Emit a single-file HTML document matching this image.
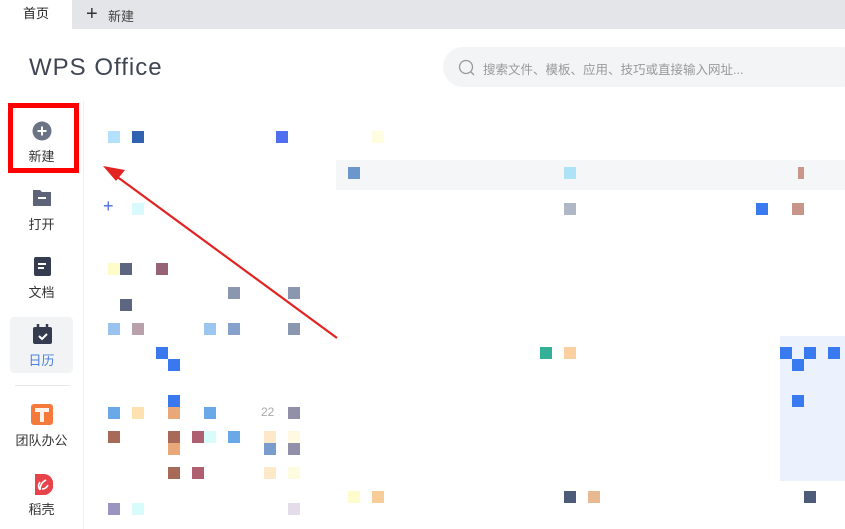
<!DOCTYPE html><html><head><meta charset="utf-8"><style>
body{margin:0;width:845px;height:529px;overflow:hidden;background:#fff;font-family:"Liberation Sans","Noto Sans CJK SC",sans-serif;position:relative}
.a{position:absolute}
.s{position:absolute;width:12px;height:12px}
.nav{position:absolute;left:0;width:83px;text-align:center;font-size:13px;color:#333}
</style></head><body>
<div class="a" style="left:0;top:0;width:845px;height:29px;background:#e4e5e8"></div>
<div class="a" style="left:0;top:0;width:72px;height:29px;background:#fff;font-size:13px;line-height:28px;text-align:center;color:#222">首页</div>
<div class="a" style="left:86px;top:3px;font-size:20px;color:#333">+</div>
<div class="a" style="left:108px;top:6px;font-size:13px;color:#444">新建</div>
<div class="a" style="left:29px;top:54px;font-size:24px;color:#404554;letter-spacing:1px">WPS Office</div>
<div class="a" style="left:443px;top:47px;width:420px;height:40px;border-radius:20px;background:#f3f4f6"></div>
<svg class="a" style="left:457px;top:58px" width="20" height="20"><circle cx="9" cy="9" r="6.5" fill="none" stroke="#999" stroke-width="1.3"/><path d="M13.5 13.5L17 17" stroke="#999" stroke-width="1.3"/></svg>
<div class="a" style="left:483px;top:59px;font-size:12.5px;color:#999">搜索文件、模板、应用、技巧或直接输入网址...</div>
<div class="a" style="left:83px;top:100px;width:1px;height:429px;background:#eef0f2"></div>
<div class="a" style="left:336px;top:160px;width:509px;height:30px;background:#f5f6f8"></div>
<div class="a" style="left:780px;top:336px;width:65px;height:145px;background:#ebf2fd"></div>
<div class="a" style="left:8px;top:103px;width:61px;height:60px;border:5px solid #f00"></div>
<svg class="a" style="left:32px;top:121px" width="20" height="20"><circle cx="10" cy="10" r="9.5" fill="#6b7385"/><path d="M10 5.5v9M5.5 10h9" stroke="#fff" stroke-width="2"/></svg>
<div class="nav" style="top:146px">新建</div>
<svg class="a" style="left:33px;top:189px" width="18" height="17"><path d="M0 1h7l2 2h9v14H0z" fill="#5d6477"/><path d="M5 9h8" stroke="#fff" stroke-width="2"/></svg>
<div class="nav" style="top:214px">打开</div>
<svg class="a" style="left:34px;top:257px" width="17" height="19"><rect width="17" height="19" rx="2" fill="#353c50"/><path d="M4 7h8M4 11h6" stroke="#fff" stroke-width="2"/></svg>
<div class="nav" style="top:282px">文档</div>
<div class="a" style="left:10px;top:317px;width:63px;height:56px;border-radius:4px;background:#f2f3f5"></div>
<svg class="a" style="left:33px;top:324px" width="19" height="20"><rect y="3" width="19" height="17" rx="2" fill="#353c50"/><path d="M5 0v5M14 0v5" stroke="#353c50" stroke-width="2.5"/><path d="M6 12l3 3 5-5" stroke="#fff" stroke-width="2" fill="none"/></svg>
<div class="nav" style="top:350px;color:#4a80e0">日历</div>
<div class="a" style="left:15px;top:385px;width:55px;height:1px;background:#e6e8eb"></div>
<svg class="a" style="left:31px;top:404px" width="22" height="21"><rect width="22" height="21" rx="3" fill="#f5793b"/><path d="M4 4h14v4h-5v10h-4V8H4z" fill="#fff" opacity=".9"/></svg>
<div class="nav" style="top:430px">团队办公</div>
<svg class="a" style="left:33px;top:474px" width="20" height="21"><path d="M2 0h9a9 10 0 0 1 0 21H2z" fill="#e8434b"/><path d="M7 16c0-5 2-8 6-10M7 16c-2-3-2-5 0-8M9 15c3 0 5-2 6-4" stroke="#fff" stroke-width="1.6" fill="none"/></svg>
<div class="nav" style="top:499px">稻壳</div>
<div class="s" style="left:108px;top:131px;background:#b3e0fb"></div>
<div class="s" style="left:132px;top:131px;background:#2f62b0"></div>
<div class="s" style="left:276px;top:131px;background:#4f6ff0"></div>
<div class="s" style="left:372px;top:131px;background:#fffde0"></div>
<div class="s" style="left:348px;top:167px;background:#6b97cc"></div>
<div class="s" style="left:564px;top:167px;background:#aee2f6"></div>
<div class="s" style="left:798px;top:167px;width:6px;background:#c8968a"></div>
<div class="a" style="left:103px;top:196px;font-size:18px;color:#4a6ee0">+</div>
<div class="s" style="left:132px;top:203px;background:#d8fafc"></div>
<div class="s" style="left:564px;top:203px;background:#b0b8c8"></div>
<div class="s" style="left:756px;top:203px;background:#3a7af0"></div>
<div class="s" style="left:792px;top:203px;background:#c8958a"></div>
<div class="s" style="left:108px;top:263px;background:#fefcc8"></div>
<div class="s" style="left:120px;top:263px;background:#5c6680"></div>
<div class="s" style="left:156px;top:263px;background:#956375"></div>
<div class="s" style="left:228px;top:287px;background:#8a97ae"></div>
<div class="s" style="left:288px;top:287px;background:#8a97ae"></div>
<div class="s" style="left:120px;top:299px;background:#5c6680"></div>
<div class="s" style="left:108px;top:323px;background:#99c3ee"></div>
<div class="s" style="left:132px;top:323px;background:#b8a1aa"></div>
<div class="s" style="left:204px;top:323px;background:#9ac6ef"></div>
<div class="s" style="left:228px;top:323px;background:#85a1cc"></div>
<div class="s" style="left:288px;top:323px;background:#8a97ae"></div>
<div class="s" style="left:156px;top:347px;background:#3a78f0"></div>
<div class="s" style="left:168px;top:359px;background:#3a78f0"></div>
<div class="s" style="left:540px;top:347px;background:#34b096"></div>
<div class="s" style="left:564px;top:347px;background:#fbd0a0"></div>
<div class="s" style="left:780px;top:347px;background:#3a7af0"></div>
<div class="s" style="left:804px;top:347px;background:#3a7af0"></div>
<div class="s" style="left:828px;top:347px;background:#3a7af0"></div>
<div class="s" style="left:792px;top:359px;background:#3a7af0"></div>
<div class="s" style="left:792px;top:395px;background:#3a7af0"></div>
<div class="s" style="left:168px;top:395px;background:#3a78f0"></div>
<div class="s" style="left:108px;top:407px;background:#6aa8e8"></div>
<div class="s" style="left:132px;top:407px;background:#fde2b0"></div>
<div class="s" style="left:168px;top:407px;background:#e8a878"></div>
<div class="s" style="left:204px;top:407px;background:#6aa8e8"></div>
<div class="a" style="left:261px;top:405px;font-size:12px;color:#aaa">22</div>
<div class="s" style="left:288px;top:407px;background:#9290a8"></div>
<div class="s" style="left:108px;top:431px;background:#a86a58"></div>
<div class="s" style="left:168px;top:431px;background:#a86a58"></div>
<div class="s" style="left:192px;top:431px;background:#ae6070"></div>
<div class="s" style="left:204px;top:431px;background:#d8fcfc"></div>
<div class="s" style="left:228px;top:431px;background:#6aa8e8"></div>
<div class="s" style="left:264px;top:431px;background:#fde8c8"></div>
<div class="s" style="left:288px;top:431px;background:#fef9e0"></div>
<div class="s" style="left:168px;top:443px;background:#e8a878"></div>
<div class="s" style="left:264px;top:443px;background:#7a9ccc"></div>
<div class="s" style="left:288px;top:443px;background:#9290a8"></div>
<div class="s" style="left:168px;top:467px;background:#a86a58"></div>
<div class="s" style="left:192px;top:467px;background:#ae6070"></div>
<div class="s" style="left:264px;top:467px;background:#fde8c8"></div>
<div class="s" style="left:288px;top:467px;background:#fefce0"></div>
<div class="s" style="left:348px;top:491px;background:#fefccc"></div>
<div class="s" style="left:372px;top:491px;background:#f8cc98"></div>
<div class="s" style="left:564px;top:491px;background:#4e5a7a"></div>
<div class="s" style="left:588px;top:491px;background:#e8b890"></div>
<div class="s" style="left:804px;top:491px;background:#4e5a7a"></div>
<div class="s" style="left:108px;top:503px;background:#9a94c0"></div>
<div class="s" style="left:132px;top:503px;background:#d8fcfc"></div>
<div class="s" style="left:288px;top:503px;background:#e4dce8"></div>
<svg class="a" style="left:0;top:0" width="845" height="529"><path d="M337 338L112 173" stroke="#e32222" stroke-width="2.2"/><path d="M103 166l22 4-9 11z" fill="#e32222"/></svg>
</body></html>
